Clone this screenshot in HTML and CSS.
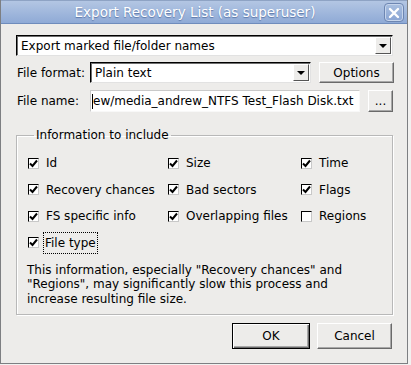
FILE: index.html
```html
<!DOCTYPE html>
<html lang="en">
<head>
  <meta charset="UTF-8" />
  <title>Export Recovery List</title>
  <link rel="stylesheet" href="styles.css">
</head>
<body>
  <div class="window">
    <!-- Title bar -->
    <div class="titlebar">
      <span class="title">Export Recovery List (as superuser)</span>
      <div class="close-btn">
        <svg width="12" height="12" viewBox="0 0 12 12"><path d="M2 2L10 10M10 2L2 10" stroke="#fff" stroke-width="2.4" stroke-linecap="round"/></svg>
      </div>
    </div>

    <div class="body">
      <div class="combo wide">
        <span class="combo-text">Export marked file/folder names</span>
        <span class="combo-arrow"></span>
      </div>

      <div class="row">
        <label class="row-label">File format:</label>
        <div class="combo format">
          <span class="combo-text">Plain text</span>
          <span class="combo-arrow"></span>
        </div>
        <button class="btn options">Options</button>
      </div>

      <div class="row">
        <label class="row-label">File name:</label>
        <div class="textbox"><span class="caret"></span><span class="value">ew/media_andrew_NTFS Test_Flash Disk.txt</span></div>
        <button class="btn browse">...</button>
      </div>

      <fieldset class="group">
        <legend>Information to include</legend>
        <div class="checks" id="checks"></div>
        <p class="note">This information, especially "Recovery chances" and "Regions", may significantly slow this process and increase resulting file size.</p>
      </fieldset>

      <div class="actions">
        <button class="btn default">OK</button>
        <button class="btn cancel">Cancel</button>
      </div>
    </div>
  </div>
  <script>
    // Checkbox grid, row by row
    const fields = [
      ['Id', true], ['Size', true], ['Time', true],
      ['Recovery chances', true], ['Bad sectors', true], ['Flags', true],
      ['FS specific info', true], ['Overlapping files', true], ['Regions', false],
      ['File type', true, true]
    ];
    const tick = '<svg width="9" height="9" viewBox="0 0 9 9"><path d="M1 4.5L3.5 7L8 1.5" fill="none" stroke="#000" stroke-width="2"/></svg>';
    const list = document.getElementById('checks');
    fields.forEach(([name, on, focus]) => {
      const item = document.createElement('div');
      item.className = 'check';
      item.innerHTML = `<span class="box">${on ? tick : ''}</span><span class="check-label${focus ? ' focus' : ''}">${name}</span>`;
      list.appendChild(item);
    });
  </script>
</body>
</html>
```

FILE: styles.css
```css
/* Base */
* { margin: 0; padding: 0; box-sizing: border-box; }
html, body { width: 100%; height: 100%; background: #f2f1f0; }
body { font-family: "DejaVu Sans", sans-serif; font-size: 12px; color: #000; }

/* Window frame */
.window {
  width: 408px; height: 364px; background: #edecea;
  border: 1px solid #7d7f82; border-top: none;
  display: flex; flex-direction: column;
}
.titlebar {
  height: 24px; position: relative; flex-shrink: 0;
  background: linear-gradient(#b3c6e3, #8faad6);
  border-top: 1px solid #8ea3c4; border-bottom: 1px solid #6f8cbc;
  display: flex; align-items: center; justify-content: center;
}
.title { color: #fff; font-size: 13.5px; text-shadow: 0 1px 1px #5b77a8; margin-left: -18px; }
.close-btn {
  position: absolute; right: 3px; top: 2px; width: 20px; height: 19px;
  border: 1px solid #6d86b2; border-radius: 4px;
  background: linear-gradient(#a9bfe0, #8aa5d3);
  box-shadow: inset 0 0 0 1px #c6d5ec;
  display: flex; align-items: center; justify-content: center;
}

.body { flex: 1; padding: 11px 15px 0 15px; display: flex; flex-direction: column; }

/* Combos, inputs */
.combo {
  height: 21px; background: #fff; display: flex; align-items: center; flex-shrink: 0;
  border: 1px solid; border-color: #000 #e2e2e2 #e2e2e2 #000;
  box-shadow: inset 1px 1px 0 #6e6e6e;
}
.combo.wide { width: 377px; }
.combo.format { width: 221px; }
.combo-text { flex: 1; padding-left: 4px; white-space: nowrap; }
.combo-arrow {
  width: 16px; height: 17px; margin-right: 1px; position: relative;
  background: #edecea; border: 1px solid; border-color: #fff #555 #555 #fff;
}
.combo-arrow::after {
  content: ''; position: absolute; left: 3px; top: 6px;
  border-left: 4px solid transparent; border-right: 4px solid transparent; border-top: 4px solid #000;
}

.row { display: flex; align-items: center; margin-top: 6px; }
.row + .row { margin-top: 7px; }
.row-label { width: 74px; padding-left: 1px; white-space: nowrap; flex-shrink: 0; }
.textbox {
  width: 270px; height: 22px; background: #fff; overflow: hidden; white-space: nowrap; flex-shrink: 0;
  display: flex; align-items: center; padding-left: 1px;
  border: 1px solid; border-color: #c9c9c9 #f8f8f8 #f8f8f8 #c9c9c9;
}
.caret { width: 1px; height: 15px; background: #000; flex-shrink: 0; }
.value { flex-shrink: 0; }

/* Buttons */
.btn {
  font-family: inherit; font-size: 12px; color: #000; background: #edecea; flex-shrink: 0;
  border: 1px solid; border-color: #fff #6a6a6a #6a6a6a #fff;
  box-shadow: inset -1px -1px 0 #a8a8a8;
  height: 21px;
}
.options { width: 75px; margin-left: 8px; }
.browse { width: 25px; margin-left: 8px; height: 22px; }

/* Group box */
.group {
  margin-top: 16px; border: 1px solid #b8b8b8; box-shadow: 1px 1px 0 #fff, inset 1px 1px 0 #fff;
  padding: 11px 10px 8px 10px; width: 377px;
}
.group legend { padding: 0 2px; margin-left: 7px; }
.checks { display: grid; grid-template-columns: 140px 133px 1fr; row-gap: 6.5px; margin-left: 1px; }
.check { display: flex; align-items: center; height: 20px; }
.box {
  width: 11px; height: 11px; background: #fff; margin-right: 7px; flex-shrink: 0;
  border: 1px solid; border-color: #000 #c8c8c8 #c8c8c8 #000;
  display: flex; align-items: center; justify-content: center;
}
.check-label.focus { outline: 1px dotted #000; padding: 3px 1px; margin-left: -2px; }
.note { margin-top: 10px; line-height: 14.5px; padding-right: 30px; }

/* Dialog buttons */
.actions { display: flex; justify-content: flex-end; gap: 7px; margin-top: 8px; }
.actions .btn { width: 76px; height: 26px; }
.actions .default { width: 78px; border-color: #000; box-shadow: inset 1px 1px 0 #fff, inset -1px -1px 0 #6a6a6a, inset -2px -2px 0 #a8a8a8; }
.cancel { width: 75px !important; }
```
